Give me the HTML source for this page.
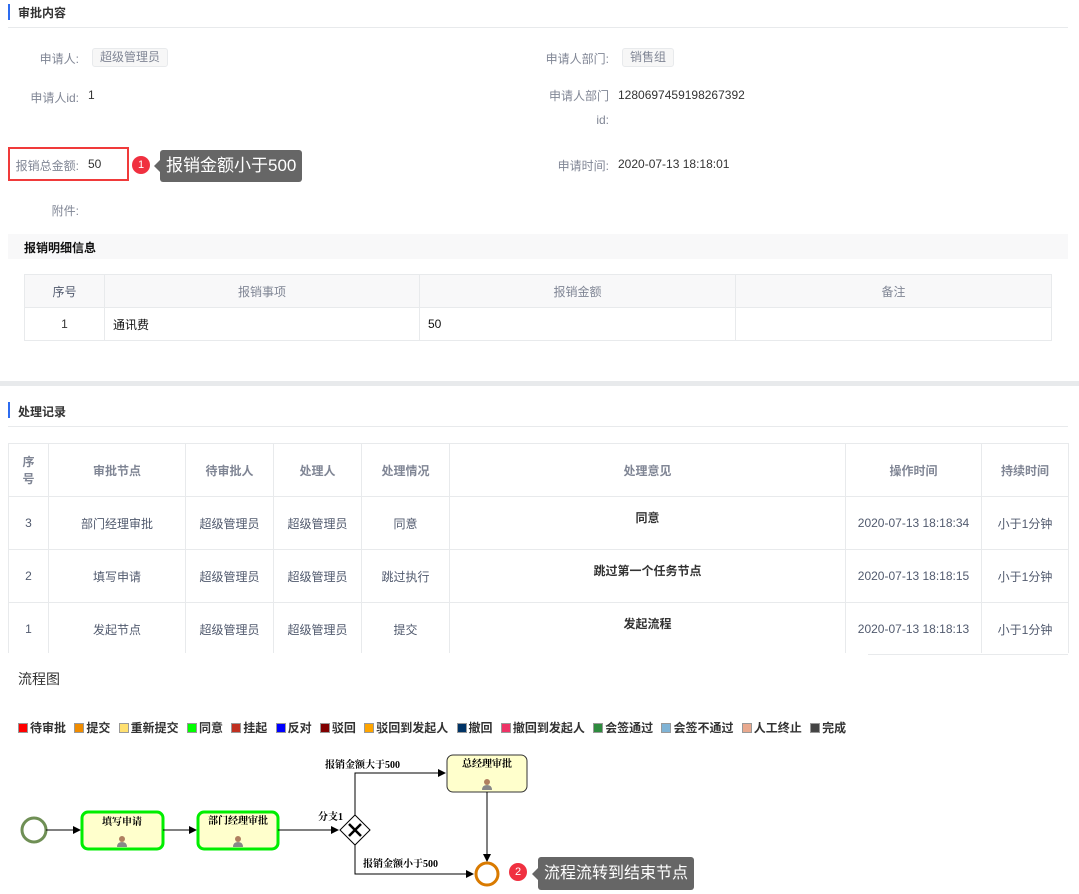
<!DOCTYPE html>
<html><head><meta charset="utf-8"><style>
*{margin:0;padding:0;box-sizing:border-box}
body{width:1079px;height:894px;background:#fff;font-family:"Liberation Sans","Noto Sans CJK SC",sans-serif;font-size:12px;color:#515a6e;position:relative;overflow:hidden}
.a{position:absolute;white-space:nowrap}
.hd{font-weight:bold;color:#333;font-size:12px}
.bar{position:absolute;width:2px;height:16px;background:#2d6cf0}
.lab{position:absolute;text-align:right;color:#808695;font-size:12px}
.val{position:absolute;color:#333}
.tag{position:absolute;border:1px solid #e8eaec;background:#f7f7f7;border-radius:3px;color:#808695;padding:0 7px;line-height:17px}
table{border-collapse:collapse;position:absolute}
td,th{border:1px solid #e8eaec;text-align:center;font-size:12px}
th{color:#808695;font-weight:bold}
.badge{position:absolute;width:18px;height:18px;border-radius:9px;background:#f03040;color:#fff;font-size:11px;text-align:center;line-height:18px}
.tip{position:absolute;background:#666;color:#fff;font-size:17px;border-radius:3px;padding:0 6px;white-space:nowrap}
.tip:before{content:"";position:absolute;left:-6px;top:50%;margin-top:-6px;border:6px solid transparent;border-left:0;border-right-color:#666}
.lg{position:absolute;top:719px;left:18px;font-weight:bold;color:#333;font-size:12px;white-space:nowrap}
.lg i{display:inline-block;width:10px;height:10px;vertical-align:-1px;margin-right:2px;border:1px solid #999}
.lg span{margin-right:8.3px}
</style></head><body>
<div class="bar" style="left:8px;top:4px"></div>
<div class="a hd" style="left:18px;top:4px">审批内容</div>
<div class="a" style="left:8px;top:27px;width:1060px;height:1px;background:#e8eaec"></div>

<div class="lab" style="left:0;width:79px;top:50px">申请人:</div>
<div class="tag" style="left:92px;top:48px">超级管理员</div>
<div class="lab" style="left:500px;width:109px;top:50px">申请人部门:</div>
<div class="tag" style="left:622px;top:48px">销售组</div>

<div class="lab" style="left:0;width:79px;top:89px">申请人id:</div>
<div class="val" style="left:88px;top:88px">1</div>
<div class="lab" style="left:500px;width:109px;top:84px;line-height:24px">申请人部门<br>id:</div>
<div class="val" style="left:618px;top:88px">1280697459198267392</div>

<div class="a" style="left:8px;top:147px;width:121px;height:34px;border:2px solid #f03a3a"></div>
<div class="lab" style="left:0;width:79px;top:157px">报销总金额:</div>
<div class="val" style="left:88px;top:157px">50</div>
<div class="badge" style="left:132px;top:156px">1</div>
<div class="tip" style="left:160px;top:150px;height:32px;line-height:32px">报销金额小于500</div>
<div class="lab" style="left:500px;width:109px;top:157px">申请时间:</div>
<div class="val" style="left:618px;top:157px">2020-07-13 18:18:01</div>

<div class="lab" style="left:0;width:79px;top:202px">附件:</div>

<div class="a" style="left:8px;top:234px;width:1060px;height:25px;background:#f8f8f9"></div>
<div class="a hd" style="left:24px;top:239px;color:#111">报销明细信息</div>

<table style="left:24px;top:274px;width:1028px">
<tr style="height:33px;background:#f8f8f9"><th style="width:80px;font-weight:normal;color:#515a6e">序号</th><th style="width:315px;font-weight:normal">报销事项</th><th style="width:316px;font-weight:normal">报销金额</th><th style="font-weight:normal">备注</th></tr>
<tr style="height:33px"><td style="color:#333">1</td><td style="text-align:left;padding-left:8px;color:#111">通讯费</td><td style="text-align:left;padding-left:8px;color:#111">50</td><td></td></tr>
</table>

<div class="a" style="left:0;top:381px;width:1079px;height:5px;background:#e8eaec"></div>
<div class="bar" style="left:8px;top:402px"></div>
<div class="a hd" style="left:18px;top:403px;color:#333">处理记录</div>
<div class="a" style="left:8px;top:426px;width:1060px;height:1px;background:#e8eaec"></div>

<div class="a" style="left:8px;top:443px;width:1061px;height:210px;overflow:hidden">
<table style="left:0;top:0;width:1061px;color:#515a6e">
<tr style="height:53px"><th style="width:40px">序<br>号</th><th style="width:137px">审批节点</th><th style="width:88px">待审批人</th><th style="width:88px">处理人</th><th style="width:88px">处理情况</th><th style="width:396px">处理意见</th><th style="width:136px">操作时间</th><th>持续时间</th></tr>
<tr style="height:53px"><td>3</td><td>部门经理审批</td><td>超级管理员</td><td>超级管理员</td><td>同意</td><td style="vertical-align:top;padding-top:12px;font-weight:bold;color:#333">同意</td><td>2020-07-13 18:18:34</td><td>小于1分钟</td></tr>
<tr style="height:53px"><td>2</td><td>填写申请</td><td>超级管理员</td><td>超级管理员</td><td>跳过执行</td><td style="vertical-align:top;padding-top:12px;font-weight:bold;color:#333">跳过第一个任务节点</td><td>2020-07-13 18:18:15</td><td>小于1分钟</td></tr>
<tr style="height:53px"><td>1</td><td>发起节点</td><td>超级管理员</td><td>超级管理员</td><td>提交</td><td style="vertical-align:top;padding-top:12px;font-weight:bold;color:#333">发起流程</td><td>2020-07-13 18:18:13</td><td>小于1分钟</td></tr>
</table></div>
<div class="a" style="left:868px;top:654px;width:200px;height:1px;background:#e8eaec"></div>

<div class="a" style="left:18px;top:669px;font-size:14px;color:#333">流程图</div>
<div class="lg"><span><i style="background:#f00"></i>待审批</span><span><i style="background:#f08c00"></i>提交</span><span><i style="background:#ffe070"></i>重新提交</span><span><i style="background:#0f0"></i>同意</span><span><i style="background:#c03020"></i>挂起</span><span><i style="background:#00f"></i>反对</span><span><i style="background:#800000"></i>驳回</span><span><i style="background:#ffa500"></i>驳回到发起人</span><span><i style="background:#003366"></i>撤回</span><span><i style="background:#ee3366"></i>撤回到发起人</span><span><i style="background:#2e8b3e"></i>会签通过</span><span><i style="background:#7fb3d5"></i>会签不通过</span><span><i style="background:#e9a98e"></i>人工终止</span><span><i style="background:#444"></i>完成</span></div>

<svg class="a" style="left:0;top:740px" width="560" height="154" font-family="Liberation Serif,Noto Serif CJK SC,serif" font-size="10" font-weight="bold">
<defs><marker id="m" markerWidth="8" markerHeight="8" refX="7" refY="4" orient="auto" markerUnits="userSpaceOnUse"><path d="M0,0 L8,4 L0,8z" fill="#000"/></marker>
<g id="p"><circle cx="0" cy="-3" r="3" fill="#b08060"/><path d="M-5,5 Q-5,0 0,0 Q5,0 5,5z" fill="#888"/></g></defs>
<circle cx="34" cy="90" r="12" fill="#fff" stroke="#6f8f55" stroke-width="3"/>
<path d="M46,90 H80" stroke="#000" marker-end="url(#m)"/>
<rect x="82" y="72" width="81" height="37" rx="6" fill="#ffffcc" stroke="#00ee00" stroke-width="3"/>
<text x="122" y="85" text-anchor="middle">填写申请</text><use href="#p" x="122" y="102"/>
<path d="M163,90 H196" stroke="#000" marker-end="url(#m)"/>
<rect x="198" y="72" width="80" height="37" rx="6" fill="#ffffcc" stroke="#00ee00" stroke-width="3"/>
<text x="238" y="84" text-anchor="middle">部门经理审批</text><use href="#p" x="238" y="102"/>
<path d="M278,90 H338" stroke="#000" marker-end="url(#m)"/>
<text x="318" y="80">分支1</text>
<path d="M355,75 L370,90 L355,105 L340,90z" fill="#fff" stroke="#000"/>
<path d="M349,84 L361,96 M361,84 L349,96" stroke="#000" stroke-width="2.5"/>
<path d="M355,75 V33 H445" stroke="#000" fill="none" marker-end="url(#m)"/>
<text x="325" y="28">报销金额大于500</text>
<rect x="447" y="15" width="80" height="37" rx="6" fill="#ffffcc" stroke="#333"/>
<text x="487" y="27" text-anchor="middle">总经理审批</text><use href="#p" x="487" y="45"/>
<path d="M487,52 V121" stroke="#000" marker-end="url(#m)"/>
<path d="M355,105 V134 H473" stroke="#000" fill="none" marker-end="url(#m)"/>
<text x="363" y="127">报销金额小于500</text>
<circle cx="487" cy="134" r="11" fill="#fff" stroke="#d97a00" stroke-width="3"/>
</svg>
<div class="badge" style="left:509px;top:863px">2</div>
<div class="tip" style="left:538px;top:857px;height:33px;line-height:33px;font-size:16px">流程流转到结束节点</div>
</body></html>
